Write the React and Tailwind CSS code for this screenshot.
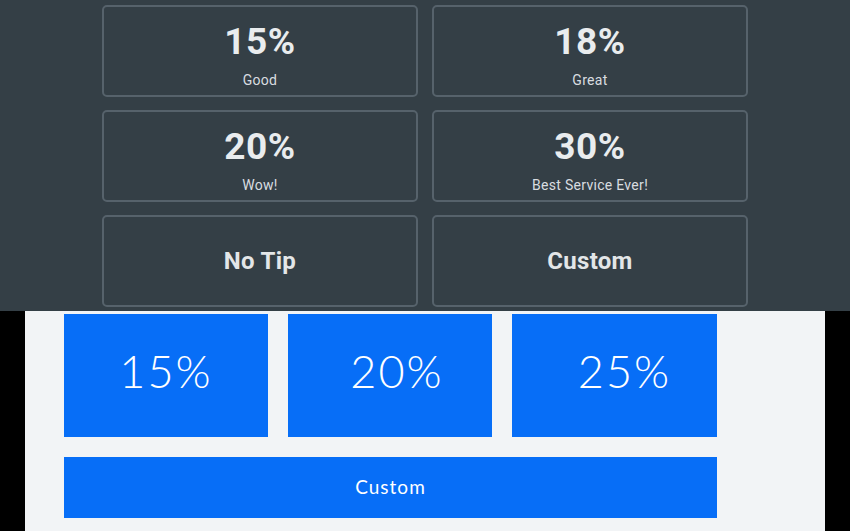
import React from "react";

const darkOptions = [
  { value: "15%", label: "Good" },
  { value: "18%", label: "Great" },
  { value: "20%", label: "Wow!" },
  { value: "30%", label: "Best Service Ever!" },
];

function DarkTile({ value, label }) {
  return (
    <button className="flex h-[92px] flex-col items-center justify-start rounded-[5px] border-2 border-[#56626b] bg-[#343f46] pt-[15px] text-[#e9ecee]">
      <span className="text-[37px] font-bold leading-[40px] tracking-[0.5px]">{value}</span>
      <span className="mt-[10px] text-[14px] leading-[16px] tracking-[0.3px] text-[#d9dde0]">{label}</span>
    </button>
  );
}

function DarkPlain({ children }) {
  return (
    <button className="flex h-[92px] items-center justify-center rounded-[5px] border-2 border-[#56626b] bg-[#343f46] text-[24px] font-bold tracking-[0.3px] text-[#e3e6e8]">
      {children}
    </button>
  );
}

function BlueTile({ children, className = "" }) {
  return (
    <button
      className={`flex h-[123px] items-center justify-center bg-[#076ef7] pb-[8px] text-[45px] font-light tracking-[2px] text-white ${className}`}
    >
      {children}
    </button>
  );
}

export default function App() {
  return (
    <div className="flex h-[531px] w-[850px] flex-col overflow-hidden bg-black">
      <section
        className="h-[311px] bg-[#343f46] pl-[102px] pt-[5px]"
        style={{ fontFamily: "Roboto, 'Liberation Sans', sans-serif" }}
      >
        <div className="grid w-[646px] grid-cols-2 gap-x-[14px] gap-y-[13px]">
          {darkOptions.map((o) => (
            <DarkTile key={o.value} value={o.value} label={o.label} />
          ))}
          <DarkPlain>No Tip</DarkPlain>
          <DarkPlain>Custom</DarkPlain>
        </div>
      </section>
      <section className="flex h-[220px] px-[25px]">
        <div
          className="flex-1 bg-[#f2f4f6] pl-[39px] pt-[3px]"
          style={{ fontFamily: "Lato, 'Open Sans', sans-serif" }}
        >
          <div className="grid w-[653px] grid-cols-[204px_204px_205px] gap-x-[20px] gap-y-[20px]">
            <BlueTile>15%</BlueTile>
            <BlueTile className="pl-[14px]">20%</BlueTile>
            <BlueTile className="pl-[20px]">25%</BlueTile>
            <button className="col-span-3 flex h-[61px] items-center justify-center bg-[#076ef7] text-[19px] tracking-[1px] text-white">
              Custom
            </button>
          </div>
        </div>
      </section>
    </div>
  );
}
